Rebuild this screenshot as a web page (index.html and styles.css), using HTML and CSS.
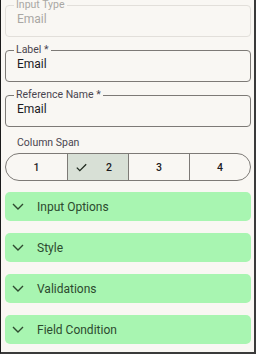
FILE: index.html
```html
<!DOCTYPE html>
<html>
<head>
<meta charset="utf-8">
<link rel="stylesheet" href="styles.css">
</head>
<body>
<div class="frame">
  <fieldset class="field disabled">
    <legend>Input Type</legend>
    <div class="value">Email</div>
  </fieldset>
  <fieldset class="field">
    <legend>Label *</legend>
    <div class="value">Email</div>
  </fieldset>
  <fieldset class="field">
    <legend>Reference Name *</legend>
    <div class="value">Email</div>
  </fieldset>
  <div class="span-label">Column Span</div>
  <div class="segments">
    <div class="seg">1</div>
    <div class="seg selected">
      <svg class="check" width="11" height="9" viewBox="0 0 11 9"><path d="M0.8 4.6 L3.8 7.6 L10.2 1.2" fill="none" stroke="#1f2a1f" stroke-width="1.3"/></svg>
      <span>2</span>
    </div>
    <div class="seg">3</div>
    <div class="seg">4</div>
  </div>
  <div class="accordions">
    <div class="acc"><svg class="chev" width="12" height="7" viewBox="0 0 12 7"><path d="M1 1 L6 6 L11 1" fill="none" stroke="#2f4a30" stroke-width="1.4"/></svg><span>Input Options</span></div>
    <div class="acc"><svg class="chev" width="12" height="7" viewBox="0 0 12 7"><path d="M1 1 L6 6 L11 1" fill="none" stroke="#2f4a30" stroke-width="1.4"/></svg><span>Style</span></div>
    <div class="acc"><svg class="chev" width="12" height="7" viewBox="0 0 12 7"><path d="M1 1 L6 6 L11 1" fill="none" stroke="#2f4a30" stroke-width="1.4"/></svg><span>Validations</span></div>
    <div class="acc"><svg class="chev" width="12" height="7" viewBox="0 0 12 7"><path d="M1 1 L6 6 L11 1" fill="none" stroke="#2f4a30" stroke-width="1.4"/></svg><span>Field Condition</span></div>
  </div>
</div>
</body>
</html>
```

FILE: styles.css
```css
html, body {
  margin: 0;
  padding: 0;
  background: #ffffff;
  font-family: Roboto, "Liberation Sans", sans-serif;
}

.frame {
  box-sizing: border-box;
  width: 256px;
  height: 354px;
  overflow: hidden;
  background: #f9f7f3;
  border-left: 1px solid #1a1a1a;
  border-right: 2px solid #3a3a3a;
  border-bottom: 2px solid #3a3a3a;
  padding: 0 3px 0 4px;
}

.field {
  margin: 7px 0 0 0;
  padding: 0 11px 9px 11px;
  border: 1px solid #7d7a76;
  border-radius: 4px;
  min-width: 0;
}

.field.disabled {
  margin-top: -1px;
  border-color: #e2dfda;
}

.field legend {
  font-size: 10.5px;
  line-height: 12px;
  color: #49454f;
  padding: 0 2px;
  margin-left: -3px;
}

.field.disabled legend,
.field.disabled .value {
  color: #a9a7a4;
}

.value {
  font-size: 12px;
  line-height: 16px;
  color: #1c1b1f;
}

.span-label {
  margin-top: 9px;
  padding-left: 12px;
  font-size: 10.5px;
  line-height: 14px;
  color: #49454f;
}

.segments {
  margin-top: 3px;
  display: grid;
  grid-template-columns: repeat(4, 1fr);
  height: 28px;
  box-sizing: border-box;
  border: 1px solid #7d7a76;
  border-radius: 14px;
  overflow: hidden;
}

.seg {
  display: flex;
  align-items: center;
  justify-content: center;
  font-size: 10.5px;
  font-weight: 500;
  color: #1c1b1f;
  border-left: 1px solid #7d7a76;
}

.seg:first-child {
  border-left: none;
}

.seg.selected {
  background: #d8e0d6;
  gap: 19px;
  padding-right: 8px;
}

.check {
  display: block;
}

.accordions {
  margin-top: 11px;
  display: flex;
  flex-direction: column;
  gap: 12px;
}

.acc {
  height: 29px;
  background: #a8f5b1;
  border-radius: 5px;
  display: flex;
  align-items: center;
  padding-left: 7px;
  gap: 13px;
  font-size: 12px;
  color: #2c4a2e;
}

.chev {
  display: block;
}
```
